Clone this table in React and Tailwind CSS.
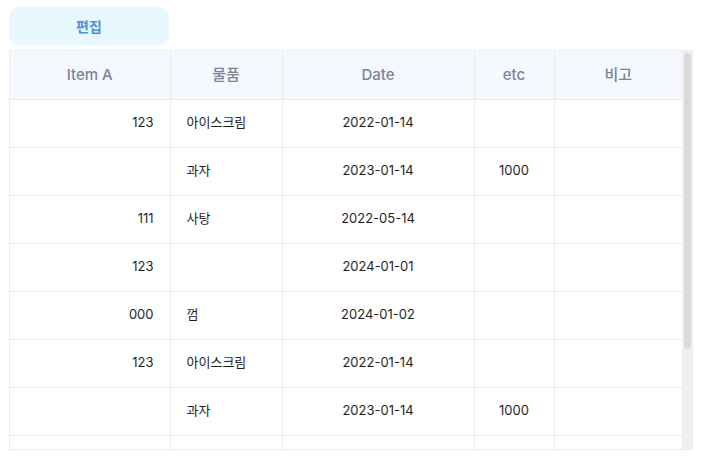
const rows = [
  { a: '123', item: '아이스크림', date: '2022-01-14', etc: '' },
  { a: '', item: '과자', date: '2023-01-14', etc: '1000' },
  { a: '111', item: '사탕', date: '2022-05-14', etc: '' },
  { a: '123', item: '', date: '2024-01-01', etc: '' },
  { a: '000', item: '껌', date: '2024-01-02', etc: '' },
];

// 7 visible rows, the 8th is cut off by the box edge
const data = [...rows, rows[0], rows[1], { a: '', item: '', date: '', etc: '' }];

export default function App() {
  return (
    <div
      className="pl-[9px] pt-[7px] bg-white"
      style={{ fontFamily: 'Inter, "Noto Sans CJK KR", sans-serif' }}
    >
      <button className="w-[160px] h-[38px] rounded-[10px] bg-[#e8f8ff] text-[#4a8fe0] text-[14px] font-bold">
        편집
      </button>

      <div className="mt-[5px] w-[684px] h-[400px] border border-[#ececec] flex">
        <div className="flex-1 overflow-hidden">
          <table className="w-full table-fixed border-collapse">
            <colgroup>
              <col className="w-[160px]" />
              <col className="w-[112px]" />
              <col className="w-[192px]" />
              <col className="w-[80px]" />
              <col />
            </colgroup>
            <thead>
              <tr className="h-[48px] bg-[#f5f8ff] text-[#7b8498] text-[15px]">
                <th className="border-r border-b border-[#ececec] font-medium">Item A</th>
                <th className="border-r border-b border-[#ececec] font-medium">물품</th>
                <th className="border-r border-b border-[#ececec] font-medium">Date</th>
                <th className="border-r border-b border-[#ececec] font-medium">etc</th>
                <th className="border-b border-[#ececec] font-medium">비고</th>
              </tr>
            </thead>
            <tbody className="text-[13px] text-[#1f1f1f]">
              {data.map((r, i) => (
                <tr key={i} className="h-[48px]">
                  <td className="border-r border-b border-[#ececec] text-right pr-[16px]">{r.a}</td>
                  <td className="border-r border-b border-[#ececec] text-left pl-[16px]">{r.item}</td>
                  <td className="border-r border-b border-[#ececec] text-center">{r.date}</td>
                  <td className="border-r border-b border-[#ececec] text-center">{r.etc}</td>
                  <td className="border-b border-[#ececec]"></td>
                </tr>
              ))}
            </tbody>
          </table>
        </div>

        {/* scrollbar */}
        <div className="w-[10px] bg-[#f0f0f0] pt-[2px]">
          <div className="mx-auto w-[7px] h-[296px] rounded-full bg-[#dadada]" />
        </div>
      </div>
    </div>
  );
}
